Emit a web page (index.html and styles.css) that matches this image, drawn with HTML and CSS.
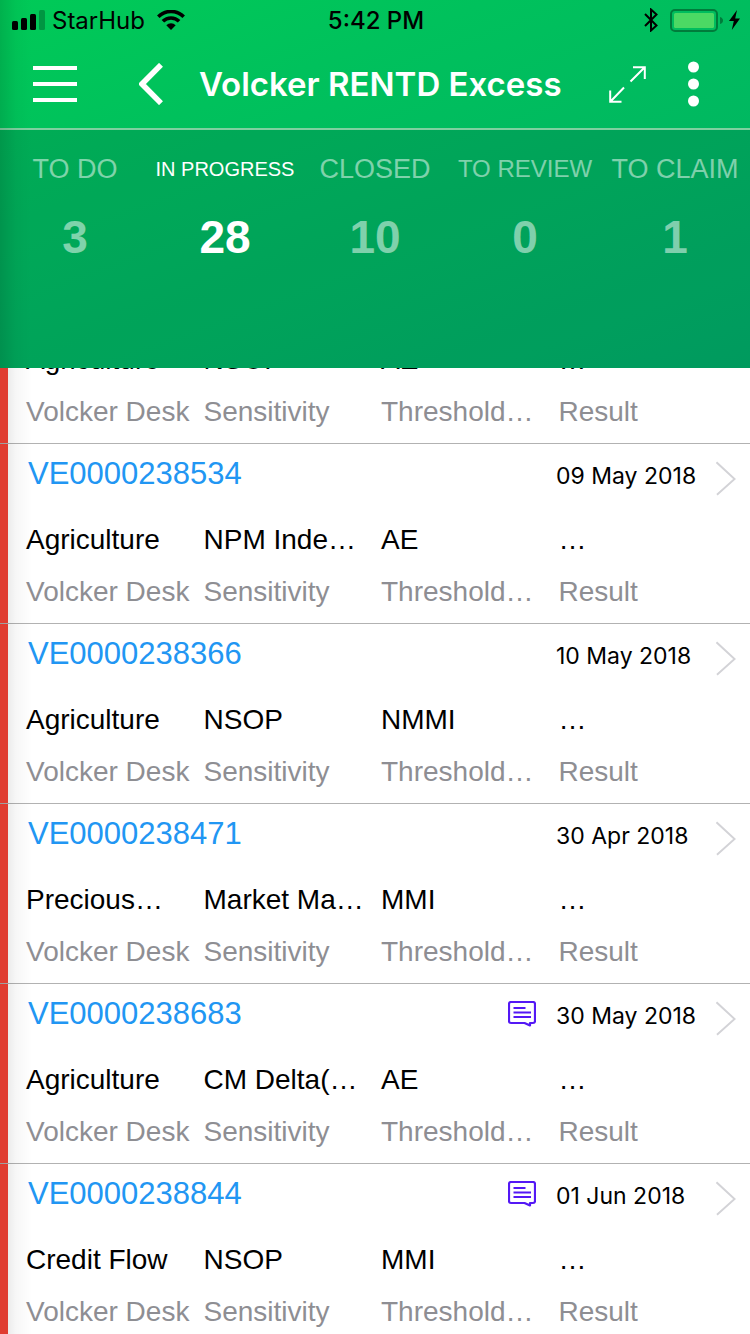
FILE: index.html
```html
<!DOCTYPE html>
<html lang="en">
<head>
<meta charset="utf-8">
<meta name="viewport" content="width=device-width, initial-scale=1">
<title>Volcker RENTD Excess</title>
<link rel="stylesheet" href="styles.css">
</head>
<body>
<svg class="sprite" aria-hidden="true">
  <symbol id="chevron" viewBox="0 0 21 35"><path d="M0.500 0.500L19.500 18L1 34.500" fill="none" stroke="#d3d3d7" stroke-width="2"/></symbol>
  <symbol id="comment" viewBox="0 0 28 26"><path d="M3 1H25Q27 1 27 3V20Q27 22 25 22H22V24.500L16.500 22H3Q1 22 1 20V3Q1 1 3 1Z" fill="none" stroke="#5418f5" stroke-width="2.200" stroke-linejoin="round"/><path d="M5.500 7H17.500M5.500 11.500H23M5.500 16H23" stroke="#5418f5" stroke-width="2.200"/></symbol>
</svg>
<div class="app">
  <header class="header">
    <div class="status">
      <div class="status-left">
        <svg width="33" height="20" viewBox="0 0 33 20"><rect y="11" width="6" height="9" rx="1.500"/><rect x="9" y="8" width="6" height="12" rx="1.500"/><rect x="18" y="4" width="6" height="16" rx="1.500"/><rect x="27" width="6" height="20" rx="1.500" opacity=".25"/></svg>
        <span class="carrier">StarHub</span>
        <svg width="28" height="20" viewBox="0 0 28 20"><g fill="none" stroke="#000" stroke-width="3.600"><path d="M1.300 6.700A18 18 0 0 1 26.700 6.700"/><path d="M5.900 11.300A11.500 11.500 0 0 1 22.100 11.300"/></g><path d="M14 20L9.300 15.300A6.700 6.700 0 0 1 18.700 15.300Z"/></svg>
      </div>
      <time class="clock">5:42 PM</time>
      <div class="status-right">
        <svg width="14" height="24" viewBox="0 0 14 24"><path d="M1 6L12.500 17.500L7 22.500V1.500L12.500 6.500L1 18" fill="none" stroke="#000" stroke-width="2"/></svg>
        <svg width="53" height="23" viewBox="0 0 53 23"><rect x="1" y="1" width="46" height="21" rx="4" fill="none" stroke="#007c3b" stroke-width="2"/><rect x="4" y="4" width="40" height="15" rx="1.500" fill="#4cd964"/><path d="M50 8Q53 9 53 11.500T50 15Z" fill="#007c3b"/></svg>
        <svg width="11" height="20" viewBox="0 0 11 20"><path d="M8 0L0 11H4.800L2.800 20L11 8.500H6.200Z"/></svg>
      </div>
    </div>
    <nav class="nav">
      <button class="icon-button menu" aria-label="Menu"><svg width="44" height="36" viewBox="0 0 44 36"><path d="M0 2H44M0 18H44M0 34H44" stroke="#fff" stroke-width="4"/></svg></button>
      <button class="icon-button back" aria-label="Back"><svg width="24" height="42" viewBox="0 0 24 42"><path d="M22 1.800L3 21L22 40.200" fill="none" stroke="#fff" stroke-width="5.500"/></svg></button>
      <h1 class="title">Volcker RENTD Excess</h1>
      <button class="icon-button expand" aria-label="Expand"><svg width="37" height="37" viewBox="0 0 37 37"><path d="M21.500 15.500L35.500 1.500M24 1.200H35.800V13M15 21.500L1.500 35.500M1.200 24.500V35.800H12.500" fill="none" stroke="#fff" stroke-width="2"/></svg></button>
      <button class="icon-button" aria-label="More"><svg width="11" height="46" viewBox="0 0 11 46"><g fill="#fff"><circle cx="5.500" cy="6" r="5.500"/><circle cx="5.500" cy="23" r="5.500"/><circle cx="5.500" cy="40" r="5.500"/></g></svg></button>
    </nav>
    <div class="tabs">
      <button class="tab"><span class="tab-label">TO DO</span><span class="tab-count">3</span></button>
      <button class="tab tab-active"><span class="tab-label">IN PROGRESS</span><span class="tab-count">28</span></button>
      <button class="tab"><span class="tab-label">CLOSED</span><span class="tab-count">10</span></button>
      <button class="tab tab-compact"><span class="tab-label">TO REVIEW</span><span class="tab-count">0</span></button>
      <button class="tab"><span class="tab-label">TO CLAIM</span><span class="tab-count">1</span></button>
    </div>
  </header>
  <main class="viewport">
    <ul class="list" id="list"></ul>
  </main>
  <div class="edge-shadow"></div>
</div>
<script src="app.js"></script>
</body>
</html>
```
FILE: app.js
```js
const labels = ["Volcker Desk", "Sensitivity", "Threshold…", "Result"];
const items = [
  { id: "", date: "", values: ["Agriculture", "NSOP", "AE", "…"] },
  { id: "VE0000238534", date: "09 May 2018", values: ["Agriculture", "NPM Inde…", "AE", "…"] },
  { id: "VE0000238366", date: "10 May 2018", values: ["Agriculture", "NSOP", "NMMI", "…"] },
  { id: "VE0000238471", date: "30 Apr 2018", values: ["Precious…", "Market Ma…", "MMI", "…"] },
  { id: "VE0000238683", date: "30 May 2018", comment: true, values: ["Agriculture", "CM Delta(…", "AE", "…"] },
  { id: "VE0000238844", date: "01 Jun 2018", comment: true, values: ["Credit Flow", "NSOP", "MMI", "…"] }
];

const head = (item) => item.id ? `
  <a class="item-id" href="#${item.id}">${item.id}</a>
  ${item.comment ? '<svg class="comment"><use href="#comment"/></svg>' : ""}
  <time class="item-date">${item.date}</time>
  <svg class="chevron"><use href="#chevron"/></svg>` : "";

document.getElementById("list").innerHTML = items.map((item) => `
  <li class="item">
    <div class="item-flag"></div>
    <div class="item-body">
      <div class="item-head">${head(item)}</div>
      <div class="fields">${item.values.map((value, i) => `
        <div class="field"><span class="value">${value}</span><span class="label">${labels[i]}</span></div>`).join("")}
      </div>
    </div>
  </li>`).join("");
```
FILE: styles.css
```css
* {
  box-sizing: border-box;
}

body {
  margin: 0;
  background: #fff;
  color: #000;
  font-family: "Liberation Sans", Arial, sans-serif;
}

button {
  margin: 0;
  padding: 0;
  border: 0;
  background: none;
  font: inherit;
  color: inherit;
}

svg {
  display: block;
  flex: none;
}

.sprite {
  display: none;
}

.app {
  position: relative;
  display: flex;
  flex-direction: column;
  height: 100vh;
  overflow: hidden;
}

.header {
  flex: none;
  color: #fff;
  background: linear-gradient(160deg, #00ca57 0%, #00c15c 28%, #00ae66 100%);
}

.status {
  display: grid;
  grid-template-columns: 1fr auto 1fr;
  align-items: center;
  height: 40px;
  padding: 0 10px 0 12px;
  color: #000;
  font-family: Inter, sans-serif;
  font-size: 24px;
}

.status-left,
.status-right {
  display: flex;
  align-items: center;
}

.status-left {
  gap: 12px;
}

.carrier {
  margin-left: -5px;
}

.status-right {
  justify-content: flex-end;
  gap: 6px;
}

.status-right svg:first-child {
  margin-right: 6px;
}

.clock {
  font-weight: 500;
}

.nav {
  display: flex;
  align-items: center;
  height: 88px;
  padding: 0 51px 0 33px;
}

.menu {
  margin-right: 62px;
}

.back {
  margin-right: 36px;
}

.expand {
  margin-right: 42px;
}

.title {
  flex: 1;
  margin: 0;
  font-family: Inter, sans-serif;
  font-size: 33px;
  font-weight: 600;
  line-height: 40px;
  white-space: nowrap;
}

.tabs {
  display: grid;
  grid-template-columns: repeat(5, 1fr);
  height: 240px;
  border-top: 2px solid #7fd0a0;
  background: rgba(0, 60, 60, 0.17);
  background-clip: padding-box;
}

.tab {
  display: flex;
  flex-direction: column;
  align-items: center;
  gap: 23px;
  padding-top: 19px;
  color: rgba(255, 255, 255, 0.5);
}

.tab-label {
  font-size: 27px;
  line-height: 40px;
  white-space: nowrap;
}

.tab-count {
  font-size: 46px;
  font-weight: 700;
  line-height: 50px;
}

.tab-compact .tab-label {
  font-size: 24px;
}

.tab-active {
  color: #fff;
}

.tab-active .tab-label {
  font-size: 20px;
}

.viewport {
  flex: 1;
  min-height: 0;
  overflow: hidden;
}

/* The list is scrolled part of the way through its first item. */
.list {
  margin: -104px 0 0;
  padding: 0;
  list-style: none;
}

.item {
  display: flex;
  border-bottom: 1px solid #b2b2b2;
}

.item-flag {
  position: relative;
  z-index: 1;
  flex: none;
  width: 8px;
  background: #e03c31;
}

.item-body {
  flex: 1;
  min-width: 0;
  padding: 0 14px 5px 18px;
}

.item-head {
  display: flex;
  align-items: baseline;
  height: 60px;
  margin-bottom: 10px;
  padding-left: 2px;
  line-height: 60px;
}

.item-id {
  flex: 1;
  color: #2196f3;
  font-size: 31px;
  text-decoration: none;
}

.comment {
  align-self: center;
  width: 28px;
  height: 26px;
  margin-right: 20px;
}

.item-date {
  flex: none;
  width: 160px;
  font-family: Inter, sans-serif;
  font-size: 23px;
}

.chevron {
  align-self: flex-end;
  width: 20px;
  height: 35px;
  margin-bottom: 8px;
}

.fields {
  display: grid;
  grid-template-columns: repeat(4, 1fr);
  font-size: 28px;
  line-height: 52px;
}

.field {
  display: flex;
  flex-direction: column;
  min-width: 0;
  white-space: nowrap;
}

.label {
  color: #8e8e93;
}

.edge-shadow {
  position: absolute;
  inset: 0 auto 0 0;
  width: 32px;
  background: linear-gradient(90deg, rgba(0, 0, 0, 0.12), rgba(0, 0, 0, 0.03) 50%, transparent);
  pointer-events: none;
}
```
